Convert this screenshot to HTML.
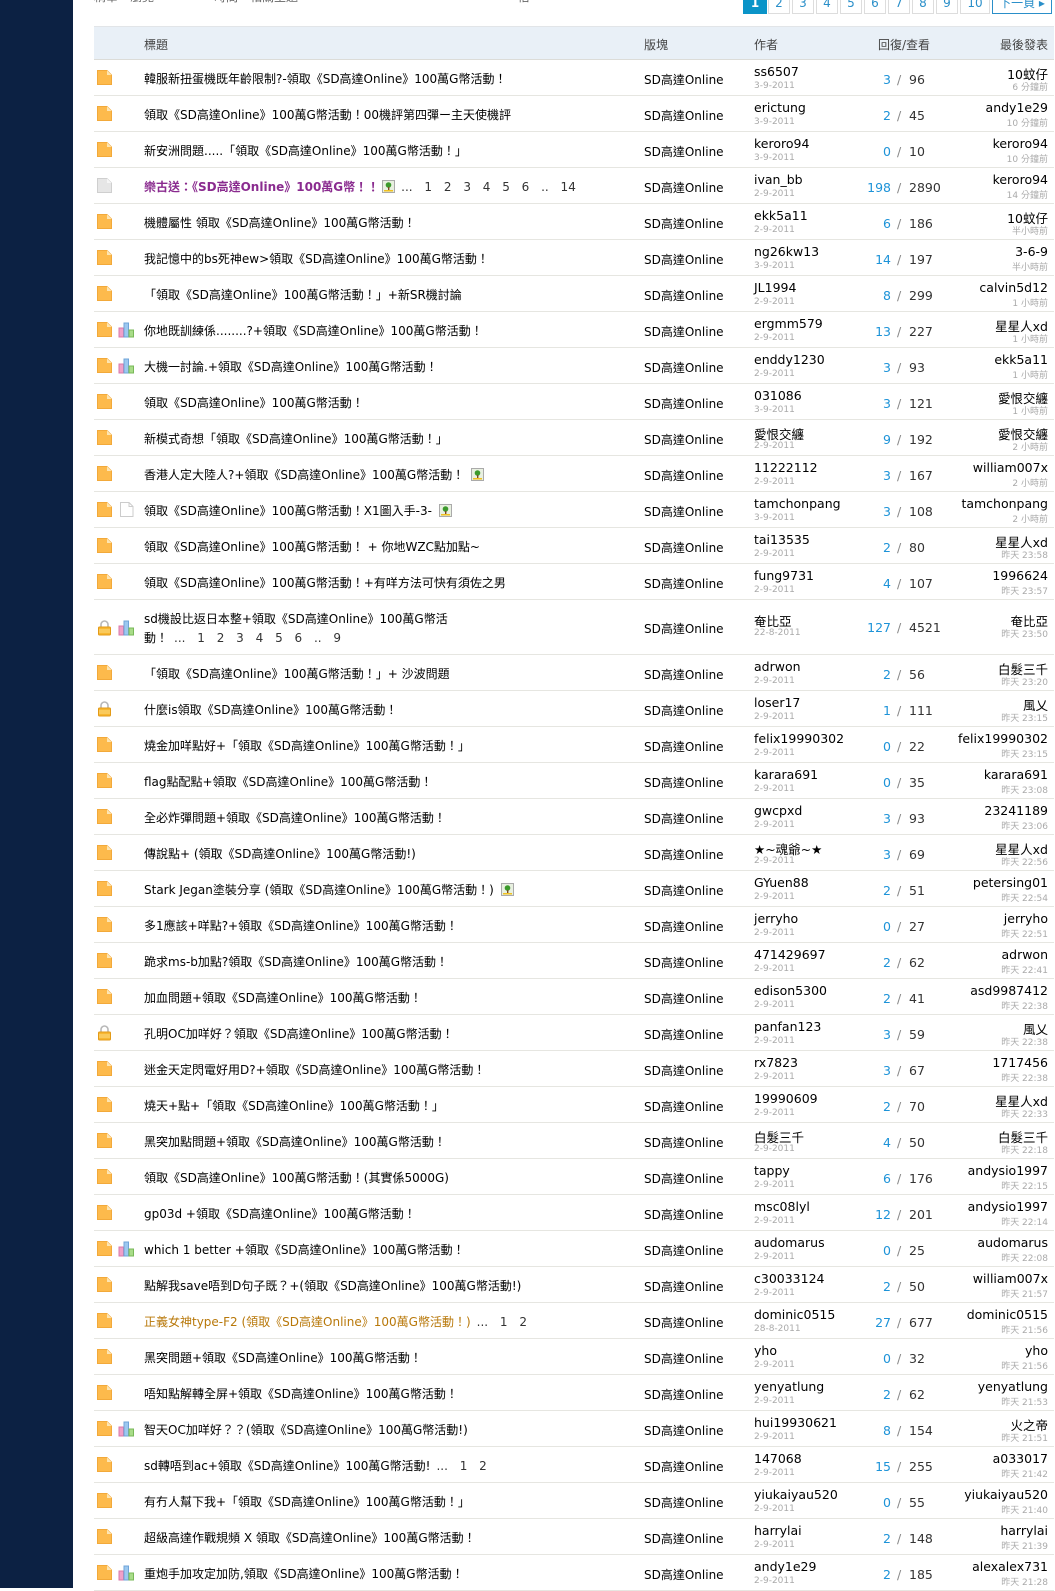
<!DOCTYPE html>
<html><head><meta charset="utf-8">
<style>
*{box-sizing:border-box;margin:0;padding:0}
body{width:1055px;height:1588px;overflow:hidden;background:#fff;position:relative;font-family:"DejaVu Sans","Noto Sans CJK TC",sans-serif;color:#000}
#side{position:absolute;left:0;top:0;width:73px;height:1588px;background:#0c2143}
#toptxt{position:absolute;left:94px;top:-12px;font-size:12px;color:#666}
.pg{position:absolute;top:-7px;height:21px;border:1px solid #ddd;font-size:12px;color:#2a8fc9;text-align:center;line-height:19px;background:#fff}
.pg.on{background:#0a94c8;color:#fff;border-color:#0a94c8;font-weight:bold}
#hd{position:absolute;left:94px;top:26px;width:960px;height:34px;background:#e9f0f7;border-top:1px solid #e2e5e8;border-bottom:1px solid #dcdcd8;font-size:12px;color:#444}
#hd span{position:absolute;top:9px}
.r{position:absolute;left:94px;width:960px;height:36px;border-bottom:1px solid #e6e6e1}
.r>*{position:absolute;white-space:nowrap}
.i{left:2px;top:9px}
.p{left:24px;top:9px}
.t{left:50px;top:11px;font-size:12px;line-height:16px}
.t em{font-style:normal;color:#333;margin-left:6px;word-spacing:8px}
.t svg{vertical-align:-2px;margin-left:3px}
.b{left:550px;top:11px;font-size:12px}
.a{left:660px;top:4px;font-size:12.5px}
.d{left:660px;top:21px;font-size:9px;color:#aaa}
.rv{right:163px;top:12px;font-size:12.5px;color:#1d93d8}
.sl{left:803px;top:12px;font-size:12.5px;color:#888}
.vw{left:815px;top:12px;font-size:12.5px;color:#333}
.l{right:6px;top:4px;font-size:12.5px}
.lt{right:6px;top:20px;font-size:9px;color:#aaa}
.pur{color:#8a2b8f;font-weight:bold}
.org{color:#b8780a}
</style></head><body>
<svg width="0" height="0" style="position:absolute">
<defs>
<g id="f"><path d="M1.5 1.5h9.5l4.5 4.5v9.5h-14z" fill="#fdba4c" stroke="#f2a93a"/><path d="M11 1.5v4.5h4.5z" fill="#fde6b4"/></g>
<g id="g"><path d="M1.5 1.5h9.5l4.5 4.5v9.5h-14z" fill="#e6e6e6" stroke="#cfcfcf"/><path d="M11 1.5v4.5h4.5z" fill="#f6f6f6"/></g>
<g id="w"><path d="M2.5 1.5h8.5l4 4v10h-12.5z" fill="#fff" stroke="#ccc"/><path d="M11 1.5v4h4" fill="none" stroke="#ccc"/></g>
<g id="k"><path d="M5 8V5.5a3.5 3.5 0 0 1 7 0V8" fill="none" stroke="#b8b8b8" stroke-width="1.6"/><rect x="2.5" y="8" width="12" height="8" rx="1" fill="#f7b732" stroke="#e39a17"/><path d="M3 11h11M3 13h11" stroke="#fddd85"/></g>
<g id="pl"><rect x="1" y="7" width="4.5" height="9" fill="#f0a0c8" stroke="#d878a8"/><rect x="6" y="2" width="4.5" height="14" fill="#9cc8f0" stroke="#6fa4d8"/><rect x="11" y="9" width="4.5" height="7" fill="#a8dc88" stroke="#78b858"/></g>
<g id="im"><rect x="0.5" y="0.5" width="12" height="12" fill="#e8f0e0" stroke="#aaa"/><circle cx="6.5" cy="5" r="2.8" fill="#3c9a2c"/><rect x="6" y="7" width="1.4" height="4" fill="#7a4a20"/><rect x="2" y="10" width="9" height="1.5" fill="#f0c020"/></g>
</defs></svg>
<div id="side"></div>
<div id="toptxt">精華　瀏覽　　　　　時間　相關主題　　　　　　　　　　　　　　　　　　 倍</div>
<div class="pg on" style="left:743px;width:24px">1</div>
<div class="pg" style="left:768px;width:22px">2</div>
<div class="pg" style="left:792px;width:22px">3</div>
<div class="pg" style="left:816px;width:22px">4</div>
<div class="pg" style="left:840px;width:22px">5</div>
<div class="pg" style="left:864px;width:22px">6</div>
<div class="pg" style="left:888px;width:22px">7</div>
<div class="pg" style="left:912px;width:22px">8</div>
<div class="pg" style="left:936px;width:22px">9</div>
<div class="pg" style="left:960px;width:30px">10</div>
<div class="pg" style="left:992px;width:60px;border-color:#2a8fc9">下一頁 ▸</div>

<div id="hd"><span style="left:50px">標題</span><span style="left:550px">版塊</span><span style="left:660px">作者</span><span style="left:784px">回復/查看</span><span style="right:6px">最後發表</span></div>

<div class="r" style="top:60px"><svg class="i" width="17" height="17"><use href="#f"/></svg><span class="t">韓服新扭蛋機既年齡限制?-領取《SD高達Online》100萬G幣活動！</span><span class="b">SD高達Online</span><span class="a">ss6507</span><span class="d">3-9-2011</span><span class="rv">3</span><span class="sl">/</span><span class="vw">96</span><span class="l">10蚊仔</span><span class="lt">6 分鐘前</span></div>
<div class="r" style="top:96px"><svg class="i" width="17" height="17"><use href="#f"/></svg><span class="t">領取《SD高達Online》100萬G幣活動！00機評第四彈ー主天使機評</span><span class="b">SD高達Online</span><span class="a">erictung</span><span class="d">3-9-2011</span><span class="rv">2</span><span class="sl">/</span><span class="vw">45</span><span class="l">andy1e29</span><span class="lt">10 分鐘前</span></div>
<div class="r" style="top:132px"><svg class="i" width="17" height="17"><use href="#f"/></svg><span class="t">新安洲問題.....「領取《SD高達Online》100萬G幣活動！」</span><span class="b">SD高達Online</span><span class="a">keroro94</span><span class="d">3-9-2011</span><span class="rv">0</span><span class="sl">/</span><span class="vw">10</span><span class="l">keroro94</span><span class="lt">10 分鐘前</span></div>
<div class="r" style="top:168px"><svg class="i" width="17" height="17"><use href="#g"/></svg><span class="t"><span class="pur">樂古送：《SD高達Online》100萬G幣！！</span><svg width="13" height="13"><use href="#im"/></svg><em>... 1 2 3 4 5 6 .. 14</em></span><span class="b">SD高達Online</span><span class="a">ivan_bb</span><span class="d">2-9-2011</span><span class="rv">198</span><span class="sl">/</span><span class="vw">2890</span><span class="l">keroro94</span><span class="lt">14 分鐘前</span></div>
<div class="r" style="top:204px"><svg class="i" width="17" height="17"><use href="#f"/></svg><span class="t">機體屬性 領取《SD高達Online》100萬G幣活動！</span><span class="b">SD高達Online</span><span class="a">ekk5a11</span><span class="d">2-9-2011</span><span class="rv">6</span><span class="sl">/</span><span class="vw">186</span><span class="l">10蚊仔</span><span class="lt">半小時前</span></div>
<div class="r" style="top:240px"><svg class="i" width="17" height="17"><use href="#f"/></svg><span class="t">我記憶中的bs死神ew&gt;領取《SD高達Online》100萬G幣活動！</span><span class="b">SD高達Online</span><span class="a">ng26kw13</span><span class="d">3-9-2011</span><span class="rv">14</span><span class="sl">/</span><span class="vw">197</span><span class="l">3-6-9</span><span class="lt">半小時前</span></div>
<div class="r" style="top:276px"><svg class="i" width="17" height="17"><use href="#f"/></svg><span class="t">「領取《SD高達Online》100萬G幣活動！」+新SR機討論</span><span class="b">SD高達Online</span><span class="a">JL1994</span><span class="d">2-9-2011</span><span class="rv">8</span><span class="sl">/</span><span class="vw">299</span><span class="l">calvin5d12</span><span class="lt">1 小時前</span></div>
<div class="r" style="top:312px"><svg class="i" width="17" height="17"><use href="#f"/></svg><svg class="p" width="17" height="17"><use href="#pl"/></svg><span class="t">你地既訓練係........?+領取《SD高達Online》100萬G幣活動！</span><span class="b">SD高達Online</span><span class="a">ergmm579</span><span class="d">2-9-2011</span><span class="rv">13</span><span class="sl">/</span><span class="vw">227</span><span class="l">星星人xd</span><span class="lt">1 小時前</span></div>
<div class="r" style="top:348px"><svg class="i" width="17" height="17"><use href="#f"/></svg><svg class="p" width="17" height="17"><use href="#pl"/></svg><span class="t">大機一討論.+領取《SD高達Online》100萬G幣活動！</span><span class="b">SD高達Online</span><span class="a">enddy1230</span><span class="d">2-9-2011</span><span class="rv">3</span><span class="sl">/</span><span class="vw">93</span><span class="l">ekk5a11</span><span class="lt">1 小時前</span></div>
<div class="r" style="top:384px"><svg class="i" width="17" height="17"><use href="#f"/></svg><span class="t">領取《SD高達Online》100萬G幣活動！</span><span class="b">SD高達Online</span><span class="a">031086</span><span class="d">3-9-2011</span><span class="rv">3</span><span class="sl">/</span><span class="vw">121</span><span class="l">愛恨交纏</span><span class="lt">1 小時前</span></div>
<div class="r" style="top:420px"><svg class="i" width="17" height="17"><use href="#f"/></svg><span class="t">新模式奇想「領取《SD高達Online》100萬G幣活動！」</span><span class="b">SD高達Online</span><span class="a">愛恨交纏</span><span class="d">2-9-2011</span><span class="rv">9</span><span class="sl">/</span><span class="vw">192</span><span class="l">愛恨交纏</span><span class="lt">2 小時前</span></div>
<div class="r" style="top:456px"><svg class="i" width="17" height="17"><use href="#f"/></svg><span class="t">香港人定大陸人?+領取《SD高達Online》100萬G幣活動！ <svg width="13" height="13"><use href="#im"/></svg></span><span class="b">SD高達Online</span><span class="a">11222112</span><span class="d">2-9-2011</span><span class="rv">3</span><span class="sl">/</span><span class="vw">167</span><span class="l">william007x</span><span class="lt">2 小時前</span></div>
<div class="r" style="top:492px"><svg class="i" width="17" height="17"><use href="#f"/></svg><svg class="p" width="17" height="17"><use href="#w"/></svg><span class="t">領取《SD高達Online》100萬G幣活動！X1圖入手-3- <svg width="13" height="13"><use href="#im"/></svg></span><span class="b">SD高達Online</span><span class="a">tamchonpang</span><span class="d">3-9-2011</span><span class="rv">3</span><span class="sl">/</span><span class="vw">108</span><span class="l">tamchonpang</span><span class="lt">2 小時前</span></div>
<div class="r" style="top:528px"><svg class="i" width="17" height="17"><use href="#f"/></svg><span class="t">領取《SD高達Online》100萬G幣活動！ + 你地WZC點加點~</span><span class="b">SD高達Online</span><span class="a">tai13535</span><span class="d">2-9-2011</span><span class="rv">2</span><span class="sl">/</span><span class="vw">80</span><span class="l">星星人xd</span><span class="lt">昨天 23:58</span></div>
<div class="r" style="top:564px"><svg class="i" width="17" height="17"><use href="#f"/></svg><span class="t">領取《SD高達Online》100萬G幣活動！+有咩方法可快有須佐之男</span><span class="b">SD高達Online</span><span class="a">fung9731</span><span class="d">2-9-2011</span><span class="rv">4</span><span class="sl">/</span><span class="vw">107</span><span class="l">1996624</span><span class="lt">昨天 23:57</span></div>
<div class="r" style="top:600px;height:55px"><svg class="i" width="17" height="17" style="top:19px"><use href="#k"/></svg><svg class="p" width="17" height="17" style="top:19px"><use href="#pl"/></svg><span class="t" style="top:10px;line-height:19px">sd機設比返日本整+領取《SD高達Online》100萬G幣活<br>動！<em>... 1 2 3 4 5 6 .. 9</em></span><span class="b" style="top:20px">SD高達Online</span><span class="a" style="top:11px">奄比亞</span><span class="d" style="top:28px">22-8-2011</span><span class="rv" style="top:20px">127</span><span class="sl" style="top:20px">/</span><span class="vw" style="top:20px">4521</span><span class="l" style="top:11px">奄比亞</span><span class="lt" style="top:27px">昨天 23:50</span></div>
<div class="r" style="top:655px"><svg class="i" width="17" height="17"><use href="#f"/></svg><span class="t">「領取《SD高達Online》100萬G幣活動！」+ 沙波問題</span><span class="b">SD高達Online</span><span class="a">adrwon</span><span class="d">2-9-2011</span><span class="rv">2</span><span class="sl">/</span><span class="vw">56</span><span class="l">白髮三千</span><span class="lt">昨天 23:20</span></div>
<div class="r" style="top:691px"><svg class="i" width="17" height="17"><use href="#k"/></svg><span class="t">什麼is領取《SD高達Online》100萬G幣活動！</span><span class="b">SD高達Online</span><span class="a">loser17</span><span class="d">2-9-2011</span><span class="rv">1</span><span class="sl">/</span><span class="vw">111</span><span class="l">風乂</span><span class="lt">昨天 23:15</span></div>
<div class="r" style="top:727px"><svg class="i" width="17" height="17"><use href="#f"/></svg><span class="t">燒金加咩點好+「領取《SD高達Online》100萬G幣活動！」</span><span class="b">SD高達Online</span><span class="a">felix19990302</span><span class="d">2-9-2011</span><span class="rv">0</span><span class="sl">/</span><span class="vw">22</span><span class="l">felix19990302</span><span class="lt">昨天 23:15</span></div>
<div class="r" style="top:763px"><svg class="i" width="17" height="17"><use href="#f"/></svg><span class="t">flag點配點+領取《SD高達Online》100萬G幣活動！</span><span class="b">SD高達Online</span><span class="a">karara691</span><span class="d">2-9-2011</span><span class="rv">0</span><span class="sl">/</span><span class="vw">35</span><span class="l">karara691</span><span class="lt">昨天 23:08</span></div>
<div class="r" style="top:799px"><svg class="i" width="17" height="17"><use href="#f"/></svg><span class="t">全必炸彈問題+領取《SD高達Online》100萬G幣活動！</span><span class="b">SD高達Online</span><span class="a">gwcpxd</span><span class="d">2-9-2011</span><span class="rv">3</span><span class="sl">/</span><span class="vw">93</span><span class="l">23241189</span><span class="lt">昨天 23:06</span></div>
<div class="r" style="top:835px"><svg class="i" width="17" height="17"><use href="#f"/></svg><span class="t">傳說點+ (領取《SD高達Online》100萬G幣活動!)</span><span class="b">SD高達Online</span><span class="a">★~魂爺~★</span><span class="d">2-9-2011</span><span class="rv">3</span><span class="sl">/</span><span class="vw">69</span><span class="l">星星人xd</span><span class="lt">昨天 22:56</span></div>
<div class="r" style="top:871px"><svg class="i" width="17" height="17"><use href="#f"/></svg><span class="t">Stark Jegan塗裝分享 (領取《SD高達Online》100萬G幣活動！) <svg width="13" height="13"><use href="#im"/></svg></span><span class="b">SD高達Online</span><span class="a">GYuen88</span><span class="d">2-9-2011</span><span class="rv">2</span><span class="sl">/</span><span class="vw">51</span><span class="l">petersing01</span><span class="lt">昨天 22:54</span></div>
<div class="r" style="top:907px"><svg class="i" width="17" height="17"><use href="#f"/></svg><span class="t">多1應該+咩點?+領取《SD高達Online》100萬G幣活動！</span><span class="b">SD高達Online</span><span class="a">jerryho</span><span class="d">2-9-2011</span><span class="rv">0</span><span class="sl">/</span><span class="vw">27</span><span class="l">jerryho</span><span class="lt">昨天 22:51</span></div>
<div class="r" style="top:943px"><svg class="i" width="17" height="17"><use href="#f"/></svg><span class="t">跪求ms-b加點?領取《SD高達Online》100萬G幣活動！</span><span class="b">SD高達Online</span><span class="a">471429697</span><span class="d">2-9-2011</span><span class="rv">2</span><span class="sl">/</span><span class="vw">62</span><span class="l">adrwon</span><span class="lt">昨天 22:41</span></div>
<div class="r" style="top:979px"><svg class="i" width="17" height="17"><use href="#f"/></svg><span class="t">加血問題+領取《SD高達Online》100萬G幣活動！</span><span class="b">SD高達Online</span><span class="a">edison5300</span><span class="d">2-9-2011</span><span class="rv">2</span><span class="sl">/</span><span class="vw">41</span><span class="l">asd9987412</span><span class="lt">昨天 22:38</span></div>
<div class="r" style="top:1015px"><svg class="i" width="17" height="17"><use href="#k"/></svg><span class="t">孔明OC加咩好？領取《SD高達Online》100萬G幣活動！</span><span class="b">SD高達Online</span><span class="a">panfan123</span><span class="d">2-9-2011</span><span class="rv">3</span><span class="sl">/</span><span class="vw">59</span><span class="l">風乂</span><span class="lt">昨天 22:38</span></div>
<div class="r" style="top:1051px"><svg class="i" width="17" height="17"><use href="#f"/></svg><span class="t">迷金天定閃電好用D?+領取《SD高達Online》100萬G幣活動！</span><span class="b">SD高達Online</span><span class="a">rx7823</span><span class="d">2-9-2011</span><span class="rv">3</span><span class="sl">/</span><span class="vw">67</span><span class="l">1717456</span><span class="lt">昨天 22:38</span></div>
<div class="r" style="top:1087px"><svg class="i" width="17" height="17"><use href="#f"/></svg><span class="t">燒天+點+「領取《SD高達Online》100萬G幣活動！」</span><span class="b">SD高達Online</span><span class="a">19990609</span><span class="d">2-9-2011</span><span class="rv">2</span><span class="sl">/</span><span class="vw">70</span><span class="l">星星人xd</span><span class="lt">昨天 22:33</span></div>
<div class="r" style="top:1123px"><svg class="i" width="17" height="17"><use href="#f"/></svg><span class="t">黑突加點問題+領取《SD高達Online》100萬G幣活動！</span><span class="b">SD高達Online</span><span class="a">白髮三千</span><span class="d">2-9-2011</span><span class="rv">4</span><span class="sl">/</span><span class="vw">50</span><span class="l">白髮三千</span><span class="lt">昨天 22:18</span></div>
<div class="r" style="top:1159px"><svg class="i" width="17" height="17"><use href="#f"/></svg><span class="t">領取《SD高達Online》100萬G幣活動！(其實係5000G)</span><span class="b">SD高達Online</span><span class="a">tappy</span><span class="d">2-9-2011</span><span class="rv">6</span><span class="sl">/</span><span class="vw">176</span><span class="l">andysio1997</span><span class="lt">昨天 22:15</span></div>
<div class="r" style="top:1195px"><svg class="i" width="17" height="17"><use href="#f"/></svg><span class="t">gp03d +領取《SD高達Online》100萬G幣活動！</span><span class="b">SD高達Online</span><span class="a">msc08lyl</span><span class="d">2-9-2011</span><span class="rv">12</span><span class="sl">/</span><span class="vw">201</span><span class="l">andysio1997</span><span class="lt">昨天 22:14</span></div>
<div class="r" style="top:1231px"><svg class="i" width="17" height="17"><use href="#f"/></svg><svg class="p" width="17" height="17"><use href="#pl"/></svg><span class="t">which 1 better +領取《SD高達Online》100萬G幣活動！</span><span class="b">SD高達Online</span><span class="a">audomarus</span><span class="d">2-9-2011</span><span class="rv">0</span><span class="sl">/</span><span class="vw">25</span><span class="l">audomarus</span><span class="lt">昨天 22:08</span></div>
<div class="r" style="top:1267px"><svg class="i" width="17" height="17"><use href="#f"/></svg><span class="t">點解我save唔到D句子既？+(領取《SD高達Online》100萬G幣活動!)</span><span class="b">SD高達Online</span><span class="a">c30033124</span><span class="d">2-9-2011</span><span class="rv">2</span><span class="sl">/</span><span class="vw">50</span><span class="l">william007x</span><span class="lt">昨天 21:57</span></div>
<div class="r" style="top:1303px"><svg class="i" width="17" height="17"><use href="#f"/></svg><span class="t"><span class="org">正義女神type-F2 (領取《SD高達Online》100萬G幣活動！)</span><em>... 1 2</em></span><span class="b">SD高達Online</span><span class="a">dominic0515</span><span class="d">28-8-2011</span><span class="rv">27</span><span class="sl">/</span><span class="vw">677</span><span class="l">dominic0515</span><span class="lt">昨天 21:56</span></div>
<div class="r" style="top:1339px"><svg class="i" width="17" height="17"><use href="#f"/></svg><span class="t">黑突問題+領取《SD高達Online》100萬G幣活動！</span><span class="b">SD高達Online</span><span class="a">yho</span><span class="d">2-9-2011</span><span class="rv">0</span><span class="sl">/</span><span class="vw">32</span><span class="l">yho</span><span class="lt">昨天 21:56</span></div>
<div class="r" style="top:1375px"><svg class="i" width="17" height="17"><use href="#f"/></svg><span class="t">唔知點解轉全屏+領取《SD高達Online》100萬G幣活動！</span><span class="b">SD高達Online</span><span class="a">yenyatlung</span><span class="d">2-9-2011</span><span class="rv">2</span><span class="sl">/</span><span class="vw">62</span><span class="l">yenyatlung</span><span class="lt">昨天 21:53</span></div>
<div class="r" style="top:1411px"><svg class="i" width="17" height="17"><use href="#f"/></svg><svg class="p" width="17" height="17"><use href="#pl"/></svg><span class="t">智天OC加咩好？？(領取《SD高達Online》100萬G幣活動!)</span><span class="b">SD高達Online</span><span class="a">hui19930621</span><span class="d">2-9-2011</span><span class="rv">8</span><span class="sl">/</span><span class="vw">154</span><span class="l">火之帝</span><span class="lt">昨天 21:51</span></div>
<div class="r" style="top:1447px"><svg class="i" width="17" height="17"><use href="#f"/></svg><span class="t">sd轉唔到ac+領取《SD高達Online》100萬G幣活動!<em>... 1 2</em></span><span class="b">SD高達Online</span><span class="a">147068</span><span class="d">2-9-2011</span><span class="rv">15</span><span class="sl">/</span><span class="vw">255</span><span class="l">a033017</span><span class="lt">昨天 21:42</span></div>
<div class="r" style="top:1483px"><svg class="i" width="17" height="17"><use href="#f"/></svg><span class="t">有冇人幫下我+「領取《SD高達Online》100萬G幣活動！」</span><span class="b">SD高達Online</span><span class="a">yiukaiyau520</span><span class="d">2-9-2011</span><span class="rv">0</span><span class="sl">/</span><span class="vw">55</span><span class="l">yiukaiyau520</span><span class="lt">昨天 21:40</span></div>
<div class="r" style="top:1519px"><svg class="i" width="17" height="17"><use href="#f"/></svg><span class="t">超級高達作戰規頻 X 領取《SD高達Online》100萬G幣活動！</span><span class="b">SD高達Online</span><span class="a">harrylai</span><span class="d">2-9-2011</span><span class="rv">2</span><span class="sl">/</span><span class="vw">148</span><span class="l">harrylai</span><span class="lt">昨天 21:39</span></div>
<div class="r" style="top:1555px"><svg class="i" width="17" height="17"><use href="#f"/></svg><svg class="p" width="17" height="17"><use href="#pl"/></svg><span class="t">重炮手加攻定加防,領取《SD高達Online》100萬G幣活動！</span><span class="b">SD高達Online</span><span class="a">andy1e29</span><span class="d">2-9-2011</span><span class="rv">2</span><span class="sl">/</span><span class="vw">185</span><span class="l">alexalex731</span><span class="lt">昨天 21:28</span></div>
</body></html>
